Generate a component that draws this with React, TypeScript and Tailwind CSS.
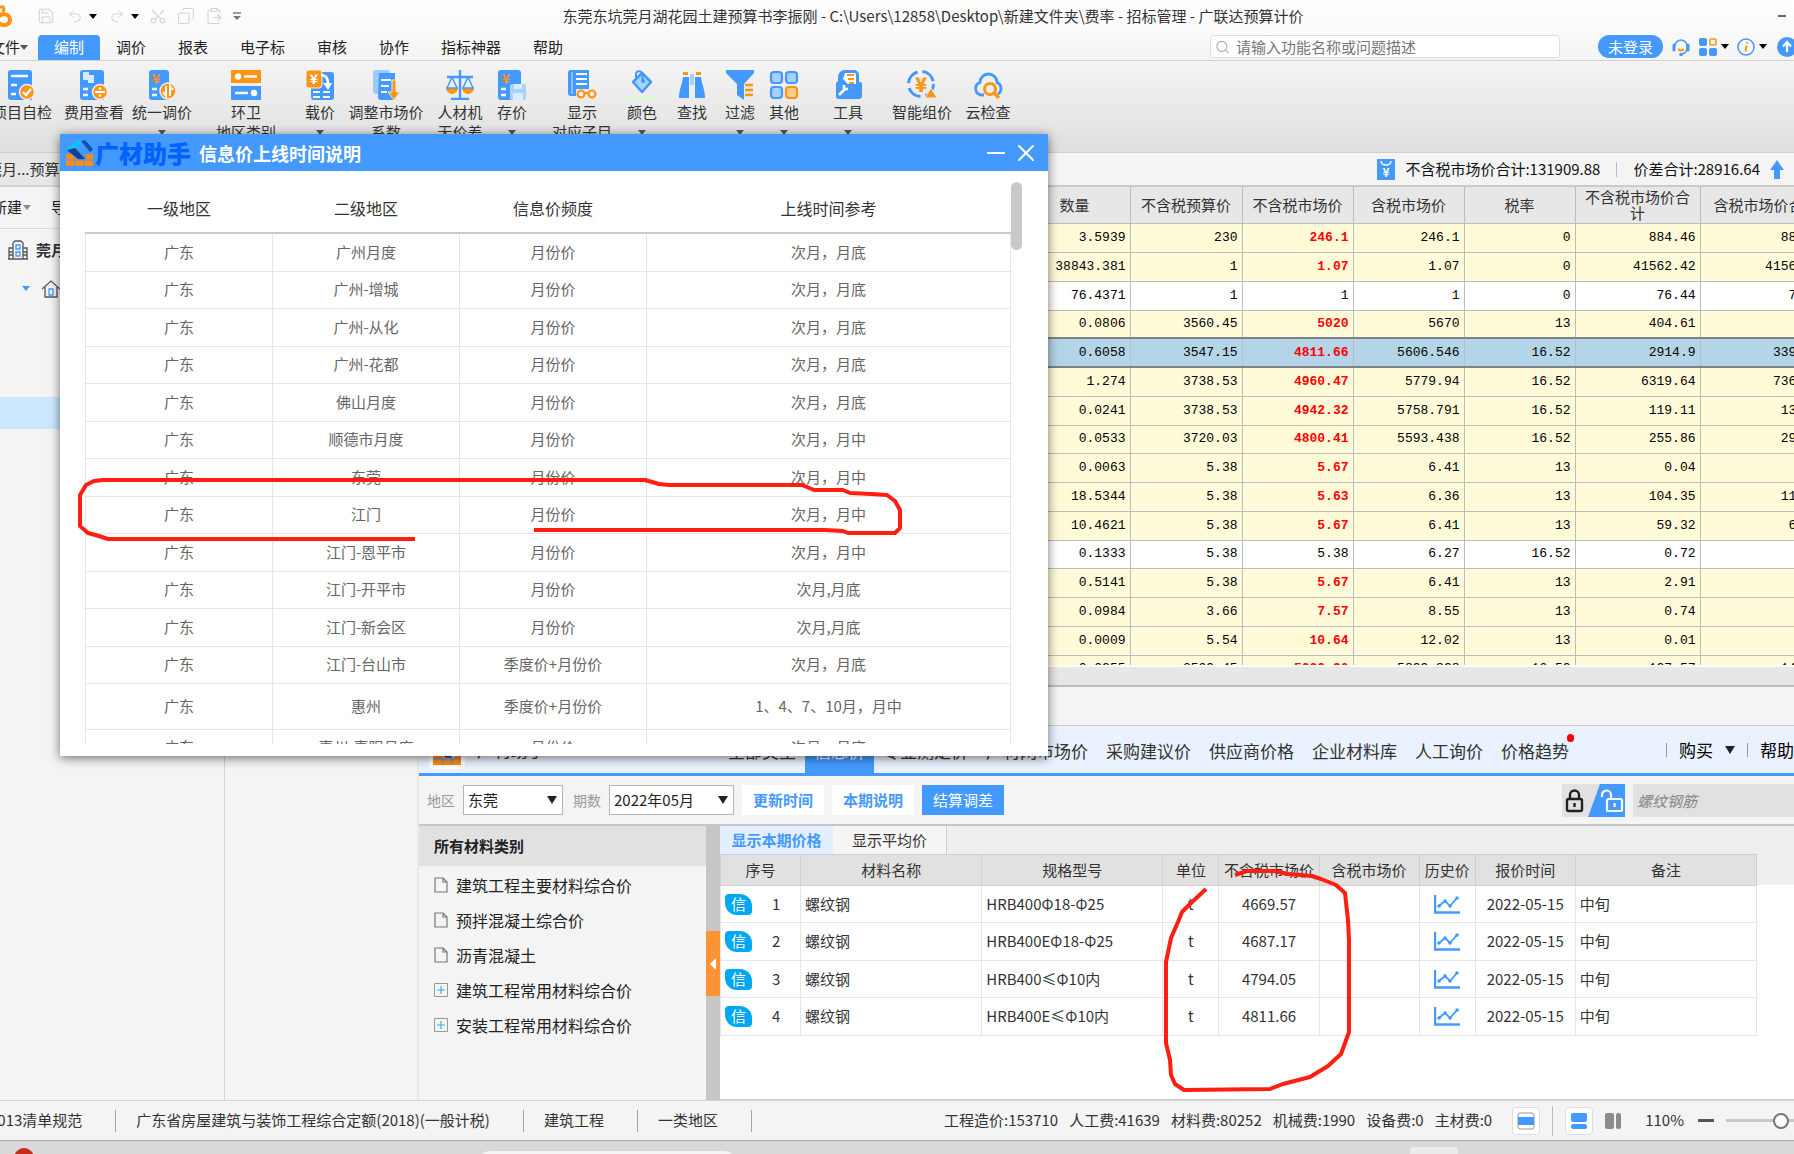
import React from "react";
import {
  ClipboardPaste,
  Copy,
  Minus,
  Redo2,
  Save,
  Scissors,
  Search,
  Undo2,
  X,
} from "lucide-react";

const BLUE = "#4499ff";
const ORANGE = "#ff9414";

/* ---------- small shared bits ---------- */

const Caret: React.FC<{ className?: string }> = ({ className = "text-black" }) => (
  <svg viewBox="0 0 8 5" className={`h-[5px] w-2 shrink-0 fill-current ${className}`}>
    <path d="M0 0h8L4 5z" />
  </svg>
);

const BrickLogo: React.FC<{ className?: string }> = ({ className }) => (
  <svg viewBox="0 0 27 26" className={className}>
    <path d="M0 14h5l7 6h6l3-3-2-3h8v12H0z" fill="#ff8a14" />
    <path d="M0 20h27M9 20v6M18 20v6" stroke="#4499ff" strokeWidth="1" />
    <path d="M1 9 11 0h7l-8 9-8 3z" fill="#16bdfa" />
    <path d="m1 10 8-2 10 11h-7z" fill="#0d3f92" />
    <path d="m15 1 4-1 8 9-3 3z" fill="#0b4fb8" />
  </svg>
);

/* ---------- ribbon ---------- */

const sheet = <path d="M4 0h18a3 3 0 0 1 3 3v27H4a3 3 0 0 1-3-3V3a3 3 0 0 1 3-3z" fill={BLUE} />;

const ribbonIcons: Record<string, React.ReactNode> = {
  check: (
    <>
      {sheet}
      <path d="M4 6h17M4 15h6M4 24h5" stroke="#fff" strokeWidth="2.4" />
      <circle cx="20" cy="22" r="7.5" fill={ORANGE} stroke="#eee" strokeWidth="1.5" />
      <path d="m16 22 3 3 5-6" fill="none" stroke="#fff" strokeWidth="2.4" />
    </>
  ),
  cost: (
    <>
      {sheet}
      <path d="M4 2h6v8H4zM9 5h6v8H9z" fill="#d7eaff" />
      <path d="M4 19h5M4 25h5" stroke="#fff" strokeWidth="2.4" />
      <circle cx="21" cy="22" r="7.5" fill={ORANGE} stroke="#eee" strokeWidth="1.5" />
      <path d="M16 22h10" stroke="#fff" strokeWidth="2.2" />
      <circle cx="21" cy="18.5" r="1.3" fill="#fff" />
      <circle cx="21" cy="25.5" r="1.3" fill="#fff" />
    </>
  ),
  adjust: (
    <>
      <path d="M5 0h14a3 3 0 0 1 3 3v27H5a3 3 0 0 1-3-3V3a3 3 0 0 1 3-3z" fill={BLUE} />
      <text x="9" y="14" textAnchor="middle" fontSize="14" fontWeight="700" fill={ORANGE}>¥</text>
      <path d="M5 19h5M5 25h5" stroke="#fff" strokeWidth="2.4" />
      <circle cx="21" cy="21" r="8" fill={ORANGE} stroke="#eee" strokeWidth="1.5" />
      <path d="M19 16v10l-3-4M23 26V16l3 4" fill="none" stroke="#fff" strokeWidth="2" />
    </>
  ),
  region: (
    <>
      <path d="M0 0h30v13H0z" fill={ORANGE} />
      <path d="M0 16h30v14H0z" fill={BLUE} />
      <circle cx="7" cy="6.5" r="3.2" fill="#fff" />
      <path d="M13 6.5h13M4 23h13" stroke="#fff" strokeWidth="2.4" />
      <circle cx="23" cy="23" r="3.2" fill="#fff" />
    </>
  ),
  load: (
    <>
      <rect x="6" y="2" width="23" height="28" rx="3" fill={BLUE} />
      <rect x="1" y="0" width="16" height="18" rx="3" fill={ORANGE} stroke="#eee" />
      <text x="9" y="14" textAnchor="middle" fontSize="14" fontWeight="700" fill="#fff">¥</text>
      <path d="M16 5c5 0 7 4 7 9" fill="none" stroke="#fff" strokeWidth="2.6" />
      <path d="M18 13h9l-4 7z" fill="#fff" />
      <path d="M8 22h7M18 22h7M8 27h7M18 27h7" stroke="#fff" strokeWidth="2" />
    </>
  ),
  factor: (
    <>
      <rect x="2" y="0" width="17" height="24" rx="3" fill="#9ccbff" />
      <path d="M8 3h16v27H10a3 3 0 0 1-3-3z" fill={BLUE} />
      <path d="M10 10h10M10 16h8M10 22h6" stroke="#fff" strokeWidth="2" />
      <path d="M21 10h4v12h4l-6 8-6-8h4z" fill={ORANGE} stroke="#e8e8e8" />
    </>
  ),
  scale: (
    <>
      <path d="M15 0v28M6 29h18M2 7h26" stroke={BLUE} strokeWidth="2.4" />
      <path d="M7 7 2 18M7 7l5 11M23 7l-5 11M23 7l5 11" stroke={BLUE} strokeWidth="1.5" />
      <path d="M1 18h12a6 6 0 0 1-12 0zM17 18h12a6 6 0 0 1-12 0z" fill={ORANGE} />
      <path d="M1 18h12M17 18h12" stroke={BLUE} strokeWidth="1.5" />
    </>
  ),
  store: (
    <>
      <path d="M4 0h17a3 3 0 0 1 3 3v27H4a3 3 0 0 1-3-3V3a3 3 0 0 1 3-3z" fill={BLUE} />
      <text x="9" y="14" textAnchor="middle" fontSize="14" fontWeight="700" fill={ORANGE}>¥</text>
      <path d="M4 19h5M4 25h5" stroke="#fff" strokeWidth="2.4" />
      <rect x="13" y="14" width="16" height="16" rx="2" fill="#a9d3ff" />
      <path d="M17 14h8v5h-8zM16 23h10v7H16z" fill="#d9edff" />
    </>
  ),
  show: (
    <>
      <path d="M5 0h17v19H9v7H4a3 3 0 0 1-3-3V3a3 3 0 0 1 4-3z" fill={BLUE} />
      <path d="M9 4h11M9 9h11M9 14h11" stroke="#fff" strokeWidth="2.2" />
      <path d="M5 2v22" stroke="#cfe5ff" strokeWidth="1" />
      <circle cx="14" cy="24" r="3.5" fill="none" stroke={ORANGE} strokeWidth="2.2" />
      <circle cx="25" cy="24" r="3.5" fill="none" stroke={ORANGE} strokeWidth="2.2" />
      <path d="M17 23h5" stroke={ORANGE} strokeWidth="2" />
    </>
  ),
  colour: (
    <>
      <path d="m15 3 9 9-9 10-9-10z" fill="#a9d2ff" stroke={BLUE} strokeWidth="2.6" strokeLinejoin="round" />
      <path d="M9 10V4c0-3 5-4 6-1l1 8" fill="none" stroke={BLUE} strokeWidth="2" />
      <circle cx="16" cy="11" r="2" fill={BLUE} />
      <path d="M1 28h28" stroke="#dcf8d0" strokeWidth="3" />
    </>
  ),
  find: (
    <>
      <path d="M6 2h5v3H6zM19 2h5v3h-5z" fill={ORANGE} />
      <path d="M6 7h6v21H2c0-9 3-12 4-21zM18 7h6c1 9 4 12 4 21H18z" fill={BLUE} />
      <path d="M14 4v11M16 4v11" stroke="#7db8ff" strokeWidth="1.2" />
    </>
  ),
  filter: (
    <>
      <path d="M1 0h28v3L19 14v16l-7-5V14L1 3z" fill={BLUE} />
      <path d="M20 15h8M20 20h8M20 25h8" stroke={ORANGE} strokeWidth="2.4" />
    </>
  ),
  other: (
    <>
      <g fill="#a6d0ff" stroke={BLUE} strokeWidth="2.2">
        <rect x="2" y="2" width="11" height="11" rx="3" />
        <rect x="17" y="2" width="11" height="11" rx="3" />
        <rect x="2" y="17" width="11" height="11" rx="3" />
      </g>
      <rect x="17" y="17" width="11" height="11" rx="3" fill="#ffd08a" stroke={ORANGE} strokeWidth="2.2" />
    </>
  ),
  tool: (
    <>
      <path d="M12 0h9a5 5 0 0 1 5 5v7h1a2 2 0 0 1 2 2v12a3 3 0 0 1-3 3H6a3 3 0 0 1-3-3V13l2-2V7a7 7 0 0 1 7-7z" fill={BLUE} />
      <path d="M12 3h9a2 2 0 0 1 2 2v9h-8l-5-5z" fill="#fff" />
      <path d="M14 5h7M15 9h6M16 13h5" stroke={ORANGE} strokeWidth="1.8" />
      <path d="m6 25 6-6M11 15v4h4" fill="none" stroke="#fff" strokeWidth="2.6" />
    </>
  ),
  smart: (
    <>
      <circle cx="14" cy="14" r="12.5" fill="none" stroke={BLUE} strokeWidth="3" strokeDasharray="15 5" />
      <text x="14" y="22" textAnchor="middle" fontSize="20" fontWeight="900" fill={ORANGE}>¥</text>
      <path d="m24 18 6 10H18z" fill={ORANGE} stroke="#e8e8e8" />
    </>
  ),
  cloud: (
    <>
      <path
        d="M11 25H8a6.5 6.5 0 0 1-1-12.5 8.5 8.5 0 0 1 17 0A6.5 6.5 0 0 1 25 24"
        fill="none"
        stroke={BLUE}
        strokeWidth="2.8"
      />
      <circle cx="17" cy="19" r="5.5" fill="none" stroke={ORANGE} strokeWidth="3" />
      <path d="m21 23 5 5" stroke={ORANGE} strokeWidth="3.2" />
    </>
  ),
};

const ribbonItems = [
  { icon: "check", label: "项目自检", box: "w-[68px]" },
  { icon: "cost", label: "费用查看", box: "w-[68px] ml-1" },
  { icon: "adjust", label: "统一调价", box: "w-[68px]", menu: true },
  { icon: "region", label: "环卫", sub: "地区类别", box: "w-[68px] ml-4" },
  { icon: "load", label: "载价", box: "w-12 ml-4", menu: true },
  { icon: "factor", label: "调整市场价", sub: "系数", box: "w-[84px]" },
  { icon: "scale", label: "人材机", sub: "无价差", box: "w-14 ml-1" },
  { icon: "store", label: "存价", box: "w-12", menu: true },
  { icon: "show", label: "显示", sub: "对应子目", box: "w-[68px] ml-3" },
  { icon: "colour", label: "颜色", box: "w-12 ml-0.5", menu: true },
  { icon: "find", label: "查找", box: "w-12 ml-0.5" },
  { icon: "filter", label: "过滤", box: "w-12", menu: true },
  { icon: "other", label: "其他", box: "w-12 -ml-1", menu: true },
  { icon: "tool", label: "工具", box: "w-12 ml-4", menu: true },
  { icon: "smart", label: "智能组价", box: "w-[68px] ml-4" },
  { icon: "cloud", label: "云检查", box: "w-14 ml-1" },
];

const menuTabs = ["调价", "报表", "电子标", "审核", "协作", "指标神器", "帮助"];

const TopBar: React.FC = () => (
  <header>
    <div className="bg-gradient-to-b from-white to-[#f4f4f4]">
      {/* Title row with the quick access icons */}
      <div className="flex h-8 items-center overflow-hidden">
        <div className="flex w-[242px] shrink-0 items-center text-[#d4d4d4]">
          <svg viewBox="0 0 13 22" className="h-[22px] w-[13px]">
            <path d="M0 3c3-3 5 0 3 4" fill="none" stroke={ORANGE} strokeWidth="3" />
            <path d="M-2 12c4-5 12-3 12 3 0 5-7 7-11 3" fill="none" stroke={ORANGE} strokeWidth="4" />
          </svg>
          <Save className="ml-6 h-[18px] w-[18px]" strokeWidth={1.5} />
          <Undo2 className="ml-3 h-4 w-4" strokeWidth={1.5} />
          <Caret className="ml-1.5 text-black" />
          <Redo2 className="ml-3 h-4 w-4" strokeWidth={1.5} />
          <Caret className="ml-1.5 text-black" />
          <Scissors className="ml-2.5 h-[18px] w-[18px] -rotate-90" strokeWidth={1.5} />
          <Copy className="ml-2.5 h-[18px] w-[18px] -scale-x-100" strokeWidth={1.5} />
          <ClipboardPaste className="ml-2.5 h-[18px] w-[18px]" strokeWidth={1.5} />
          <svg viewBox="0 0 8 9" className="ml-2.5 h-[9px] w-2">
            <path d="M0 1h8" stroke="#777" strokeWidth="1.5" />
            <path d="m0 4 4 4 4-4z" fill="#777" />
          </svg>
        </div>
        <h1 className="flex-1 truncate text-center text-[15px] leading-5 text-[#333]">
          东莞东坑莞月湖花园土建预算书李振刚 - C:\Users\12858\Desktop\新建文件夹\费率 - 招标管理 - 广联达预算计价
        </h1>
        <div className="flex w-[170px] shrink-0 justify-end pr-2">
          <button aria-label="最小化" className="h-0.5 w-2 bg-[#666]" />
        </div>
      </div>

      {/* Menu tabs, search and account */}
      <div className="flex h-[29px] items-end overflow-hidden border-b border-[#d2d2d2] text-[15px] text-[#222]">
        <button className="-ml-2.5 flex h-[25px] w-12 shrink-0 items-center whitespace-nowrap">
          文件
          <Caret className="text-[#555]" />
        </button>
        <button className="h-[25px] w-[62px] shrink-0 rounded-t bg-[#4499ff] text-white">编制</button>
        <nav className="flex shrink-0">
          {menuTabs.map((tab) => (
            <button key={tab} className="h-[25px] px-4">
              {tab}
            </button>
          ))}
        </nav>
        <div className="-mr-[3px] mb-0.5 ml-auto flex items-center">
          <label className="flex h-[23px] w-[350px] items-center gap-1.5 rounded border border-[#dcdcdc] bg-white px-1">
            <Search className="h-4 w-4 text-[#aaa]" strokeWidth={1.8} />
            <input
              aria-label="搜索"
              placeholder="请输入功能名称或问题描述"
              className="w-full bg-transparent text-[15px] leading-5 outline-none placeholder:text-[#777]"
            />
          </label>
          <button className="ml-[38px] h-[23px] w-[65px] rounded-full bg-[#4499ff] text-[15px] leading-5 text-white">
            未登录
          </button>
          <svg viewBox="0 0 20 20" className="ml-2 h-5 w-5" fill="none">
            <path d="M4 9a6 6 0 0 1 12 0v2a6 6 0 0 1-5 6" stroke={BLUE} strokeWidth="1.6" />
            <path d="M3 8v5M17 8v5" stroke={BLUE} strokeWidth="3" strokeLinecap="round" />
            <circle cx="10" cy="17.5" r="1.8" fill={BLUE} />
            <path d="M7 12c2 2 4 2 6 0" stroke={ORANGE} strokeWidth="2" />
          </svg>
          <svg viewBox="0 0 18 18" className="ml-2 h-[18px] w-[18px]">
            <rect width="8" height="8" rx="2" fill={BLUE} />
            <rect y="10" width="8" height="8" rx="2" fill={BLUE} />
            <rect x="10" y="10" width="8" height="8" rx="2" fill={BLUE} />
            <rect x="11" y="1" width="6" height="6" rx="1" fill="none" stroke={ORANGE} strokeWidth="1.6" />
          </svg>
          <Caret className="ml-1 text-black" />
          <svg viewBox="0 0 18 18" className="ml-2 h-[18px] w-[18px]">
            <circle cx="9" cy="9" r="8" fill="#f4f9ff" stroke={BLUE} strokeWidth="1.5" />
            <path d="m9.500 7.500-1 6M10 4v1.500" stroke={ORANGE} strokeWidth="2" />
          </svg>
          <Caret className="ml-1 text-black" />
          <svg viewBox="0 0 20 20" className="ml-2.5 h-5 w-5">
            <circle cx="10" cy="10" r="10" fill={BLUE} />
            <path d="M10 15V6M6 9.500 10 5l4 4.500" fill="none" stroke="#fff" strokeWidth="2.2" />
          </svg>
        </div>
      </div>
    </div>

    {/* Ribbon */}
    <div className="flex h-[92px] overflow-hidden border-b border-[#d0d0d0] bg-gradient-to-b from-[#f4f4f4] to-[#dfdfdf] pt-[9px] text-[15px] text-[#333]">
      <div className="-ml-3 flex">
        {ribbonItems.map((item) => (
          <button
            key={item.label}
            className={`flex shrink-0 flex-col items-center whitespace-nowrap leading-5 ${item.box}`}
          >
            <svg viewBox="0 0 30 30" className="mb-0.5 h-[30px] w-[30px]">
              {ribbonIcons[item.icon]}
            </svg>
            <span>{item.label}</span>
            {item.sub && <span>{item.sub}</span>}
            {item.menu && <Caret className="mt-2 text-[#555]" />}
          </button>
        ))}
      </div>
    </div>
  </header>
);

/* ---------- left project tree ---------- */

const ProjectTree: React.FC = () => (
  <aside className="flex w-[225px] shrink-0 flex-col overflow-hidden border-r border-[#d5d5d5] text-[15px] text-[#333]">
    <div className="h-[34px] border-b-2 border-[#d4d4d4] bg-[#e7e7e7] leading-8">
      <span className="-ml-[13px] whitespace-nowrap">莞月...预算</span>
    </div>
    <div className="flex h-[42px] items-center border-b border-[#d8d8d8] text-[#222]">
      <button className="-ml-2 flex items-center gap-px whitespace-nowrap">
        新建
        <Caret className="text-[#888]" />
      </button>
      <button className="ml-5">导入</button>
    </div>
    <div className="flex h-[42px] items-center gap-2 pl-2 font-bold">
      <svg viewBox="0 0 20 20" className="h-5 w-5" fill="none" stroke="#555" strokeWidth="1.3">
        <path d="M0 19h20M5 19V3l2-2h6l2 2v16M1 19V8h4M19 19V8h-4M1 12h4M1 15h4M15 12h4M15 15h4" />
        <path d="M8 5h4v4H8zM8 12h4v4H8z" stroke={BLUE} />
      </svg>
      莞月
    </div>
    <div className="flex h-[35px] items-center gap-3 pl-[22px]">
      <Caret className="text-[#4499ff]" />
      <svg viewBox="0 0 18 18" className="h-[18px] w-[18px]" fill="none" stroke="#555" strokeWidth="1.3">
        <path d="m0 9 9-8 9 8M3 7v10h12V7" />
        <path d="M7 9h4v6H7z" stroke={BLUE} />
      </svg>
    </div>
    <div className="mt-[91px] h-8 bg-[#cce8ff]" />
  </aside>
);

/* ---------- market price grid ---------- */

const marketRows = [
  ["3.5939", "230", "246.1", "246.1", "0", "884.46", "884.46"],
  ["38843.381", "1", "1.07", "1.07", "0", "41562.42", "41562.42"],
  ["76.4371", "1", "1", "1", "0", "76.44", "76.44"],
  ["0.0806", "3560.45", "5020", "5670", "13", "404.61", "457"],
  ["0.6058", "3547.15", "4811.66", "5606.546", "16.52", "2914.9", "3396.45"],
  ["1.274", "3738.53", "4960.47", "5779.94", "16.52", "6319.64", "7363.64"],
  ["0.0241", "3738.53", "4942.32", "5758.791", "16.52", "119.11", "138.79"],
  ["0.0533", "3720.03", "4800.41", "5593.438", "16.52", "255.86", "298.13"],
  ["0.0063", "5.38", "5.67", "6.41", "13", "0.04", "0.04"],
  ["18.5344", "5.38", "5.63", "6.36", "13", "104.35", "117.88"],
  ["10.4621", "5.38", "5.67", "6.41", "13", "59.32", "67.06"],
  ["0.1333", "5.38", "5.38", "6.27", "16.52", "0.72", "0.84"],
  ["0.5141", "5.38", "5.67", "6.41", "13", "2.91", "3.3"],
  ["0.0984", "3.66", "7.57", "8.55", "13", "0.74", "0.84"],
  ["0.0009", "5.54", "10.64", "12.02", "13", "0.01", "0.01"],
  ["0.0255", "3509.45", "5020.90", "5899.828", "16.52", "127.57", "148.65"],
];

const unchangedRows = [2, 11];
const selectedRow = 4;

const rowStyle = (i: number) => {
  if (i === selectedRow) return "bg-[#b4d4e7] border-y-2 border-[#7c8287]";
  return unchangedRows.includes(i) ? "bg-white" : "bg-[#fffbd8]";
};

const MarketGrid: React.FC = () => (
  <div className="h-[480px] shrink-0 overflow-hidden border-b-2 border-white bg-white">
    <table className="w-[1607px] table-fixed border-collapse text-black">
      <colgroup>
        <col className="w-[794px]" />
        <col className="w-[111px]" />
        <col className="w-[112px]" />
        <col className="w-[111px]" />
        <col className="w-[111px]" />
        <col className="w-[111px]" />
        <col className="w-[125px]" />
        <col className="w-[132px]" />
      </colgroup>
      <thead>
        <tr className="h-9 bg-[#e7e7e7] text-[15px] leading-4 text-[#333]">
          <th />
          {["数量", "不含税预算价", "不含税市场价", "含税市场价", "税率", "不含税市场价合计", "含税市场价合计"].map((h) => (
            <th key={h} className="border border-t-0 border-[#bdbdbd] px-1 font-normal">
              {h}
            </th>
          ))}
        </tr>
      </thead>
      <tbody className="font-['Liberation_Mono','Noto_Sans_CJK_SC',monospace] text-[13px] leading-4">
        {marketRows.map((row, i) => (
          <tr key={i} className={`h-[29px] nth-[4n]:h-7 ${rowStyle(i)}`}>
            <td />
            {row.map((value, c) => (
              <td
                key={c}
                className={`border-x border-x-[#bdbdbd] px-1 text-right ${
                  i === selectedRow ? "" : "border-y border-y-[#bdbdbd]"
                } ${c === 2 && !unchangedRows.includes(i) ? "font-bold text-[#ff0000]" : ""}`}
              >
                {value}
              </td>
            ))}
          </tr>
        ))}
      </tbody>
    </table>
  </div>
);

const TotalsBar: React.FC = () => (
  <div className="flex h-[34px] shrink-0 items-center justify-end border-b-2 border-[#cbcbcb] pr-2.5 text-[15px] text-[#111]">
    <svg viewBox="0 0 18 21" className="mr-2.5 h-[21px] w-[18px]">
      <rect width="18" height="21" rx="1" fill={BLUE} />
      <path d="M4 2a5 4 0 0 0 10 0" fill="none" stroke="#fff" strokeWidth="1.5" />
      <text x="9" y="18" textAnchor="middle" fontSize="12" fontWeight="700" fill="#fff">¥</text>
    </svg>
    <span>不含税市场价合计:131909.88</span>
    <span className="mx-4 h-[15px] w-px bg-[#a9bfdc]" />
    <span>价差合计:28916.64</span>
    <svg viewBox="0 0 14 19" className="ml-2.5 h-[19px] w-3.5">
      <path d="m7 0 7 10h-4v9H4v-9H0z" fill={BLUE} />
    </svg>
  </div>
);

/* ---------- material assistant ---------- */

const assistantTabs = [
  "全部类型",
  "信息价",
  "专业测定价",
  "广材网市场价",
  "采购建议价",
  "供应商价格",
  "企业材料库",
  "人工询价",
  "价格趋势",
];

const AssistantTabs: React.FC = () => (
  <div className="flex h-[50px] shrink-0 items-stretch overflow-hidden border-b-3 border-[#4499ff] bg-[#eaf1ff] text-[17px] text-[#333]">
    <div className="flex w-[300px] shrink-0 items-center gap-3 pl-2.5">
      <div className="mt-1 rounded-md bg-white p-1">
        <BrickLogo className="h-[27px] w-7" />
      </div>
      <span>广材助手</span>
    </div>
    <nav className="flex shrink-0">
      {assistantTabs.map((tab) => (
        <button
          key={tab}
          className={`relative px-[9px] pt-0.5 ${tab === "信息价" ? "bg-[#4499ff] text-white" : ""}`}
        >
          {tab}
          {tab === "价格趋势" && (
            <span className="absolute right-1 top-2 h-2 w-[7px] rounded-full bg-[#ff0000]" />
          )}
        </button>
      ))}
    </nav>
    <div className="ml-auto flex shrink-0 items-center gap-3 text-black">
      <span className="h-3.5 w-px bg-[#999]" />
      <button className="flex items-center gap-3">
        购买
        <svg viewBox="0 0 10 8" className="h-2 w-2.5">
          <path d="M0 0h10L5 8z" fill="#222" />
        </svg>
      </button>
      <span className="h-3.5 w-px bg-[#999]" />
      <button>帮助</button>
    </div>
  </div>
);

const Picker: React.FC<{ id: string; label: string; value: string; box: string }> = ({ id, label, value, box }) => (
  <div className="flex items-center gap-2">
    <label htmlFor={id} className="text-[14px] text-[#999]">
      {label}
    </label>
    <div className={`relative ${box}`}>
      <select
        id={id}
        className="h-[30px] w-full appearance-none border border-[#b8b8b8] bg-white pl-1 text-[15px] leading-5 text-[#222]"
      >
        <option>{value}</option>
      </select>
      <svg viewBox="0 0 10 8" className="pointer-events-none absolute right-1.5 top-[11px] h-2 w-2.5">
        <path d="M0 0h10L5 8z" fill="#222" />
      </svg>
    </div>
  </div>
);

const FilterBar: React.FC = () => (
  <div className="flex h-[50px] shrink-0 items-center overflow-hidden border-b-2 border-[#c6c6c6] pl-2 text-[15px]">
    <div className="flex items-center gap-2.5">
      <Picker id="region" label="地区" value="东莞" box="w-[100px]" />
      <Picker id="period" label="期数" value="2022年05月" box="w-[125px]" />
    </div>
    <div className="ml-2 flex gap-2 font-bold">
      <button className="h-[30px] w-[82px] bg-white text-[#4499ff]">更新时间</button>
      <button className="h-[30px] w-[82px] bg-white text-[#4499ff]">本期说明</button>
      <button className="h-[30px] w-[82px] bg-[#4499ff] font-normal text-white">结算调差</button>
    </div>
    <button aria-label="锁定" className="ml-auto">
      <svg viewBox="0 0 63 33" className="h-[33px] w-[63px]">
        <path d="M0 0h63v33H0z" fill="#e1e1e1" />
        <path d="M38 0h25v33H26z" fill={BLUE} />
        <g fill="none" stroke="#222" strokeWidth="2.4">
          <rect x="5" y="15" width="15" height="12" rx="1.5" />
          <path d="M8 15v-4a4.500 4.500 0 0 1 9 0v4M12.500 19v4" />
        </g>
        <g fill="none" stroke="#fff" strokeWidth="2.2">
          <rect x="45" y="15" width="15" height="12" rx="1.5" />
          <path d="M40 13v-2a4.500 4.500 0 0 1 9 0v4M52.500 19v4" />
        </g>
      </svg>
    </button>
    <input
      aria-label="材料搜索"
      placeholder="螺纹钢筋"
      className="ml-2 h-[33px] w-[161px] bg-[#e1e1e1] px-1 text-[15px] italic outline-none placeholder:text-[#888]"
    />
  </div>
);

const categories = [
  { name: "建筑工程主要材料综合价", group: false },
  { name: "预拌混凝土综合价", group: false },
  { name: "沥青混凝土", group: false },
  { name: "建筑工程常用材料综合价", group: true },
  { name: "安装工程常用材料综合价", group: true },
];

const CategoryPanel: React.FC = () => (
  <div className="w-[287px] shrink-0 text-[#222]">
    <h2 className="mb-px flex h-10 items-center bg-[#e1e1e1] pl-[15px] text-[15px] font-bold">所有材料类别</h2>
    <ul className="text-[16px]">
      {categories.map((item) => (
        <li key={item.name} className="flex h-[35px] items-center gap-2 pl-[15px]">
          {item.group ? (
            <svg viewBox="0 0 14 14" className="h-3.5 w-3.5" fill="none">
              <path d="M.5.5h13v13H.5z" stroke="#999" />
              <path d="M3 7h8M7 3v8" stroke="#35b4e8" strokeWidth="1.2" />
            </svg>
          ) : (
            <svg viewBox="0 0 14 16" className="h-4 w-3.5" fill="none" stroke="#777" strokeWidth="1.2">
              <path d="M1 1h8l4 4v10H1zM9 1v4h4" />
            </svg>
          )}
          {item.name}
        </li>
      ))}
    </ul>
  </div>
);

const materials = [
  { spec: "HRB400Φ18-Φ25", price: "4669.57" },
  { spec: "HRB400EΦ18-Φ25", price: "4687.17" },
  { spec: "HRB400≤Φ10内", price: "4794.05" },
  { spec: "HRB400E≤Φ10内", price: "4811.66" },
];

const MaterialTable: React.FC = () => (
  <div className="flex min-w-0 flex-1 flex-col overflow-hidden border-b border-[#ccc] bg-white text-[15px] text-[#333]">
    <div className="flex h-7 shrink-0 bg-[#efefef]">
      <button className="w-[113px] bg-[#e3eeff] font-bold text-[#4499ff]">显示本期价格</button>
      <button className="w-[114px] border-r border-[#ccc] bg-[#f5f5f5]">显示平均价</button>
    </div>
    <div className="bg-gradient-to-b from-[#efefef] from-[31px] to-white to-[31px]">
      <table className="w-[1037px] table-fixed border-collapse">
        <colgroup>
          <col className="w-20" />
          <col className="w-[181px]" />
          <col className="w-[181px]" />
          <col className="w-14" />
          <col className="w-[100px]" />
          <col className="w-[100px]" />
          <col className="w-14" />
          <col className="w-[100px]" />
          <col className="w-[181px]" />
        </colgroup>
        <thead>
          <tr className="h-[31px] bg-[#e1e1e1]">
            {["序号", "材料名称", "规格型号", "单位", "不含税市场价", "含税市场价", "历史价", "报价时间", "备注"].map((h) => (
              <th key={h} className="whitespace-nowrap border border-[#cfcfcf] font-normal">
                {h}
              </th>
            ))}
          </tr>
        </thead>
        <tbody className="[&_td]:border [&_td]:border-[#e6e6e6] [&_td]:px-1">
          {materials.map((item, i) => (
            <tr key={item.spec} className="h-[37px] even:h-[38px]">
              <td>
                <div className="flex items-center gap-5">
                  <span className="flex h-[21px] w-[27px] items-center justify-center rounded-tl-sm rounded-tr-xl rounded-br-sm rounded-bl-xl bg-[#00a8f3] text-white">
                    信
                  </span>
                  {i + 1}
                </div>
              </td>
              <td>螺纹钢</td>
              <td>{item.spec}</td>
              <td className="text-center">t</td>
              <td className="text-center">{item.price}</td>
              <td />
              <td>
                <svg viewBox="0 0 26 19" className="mx-auto h-[19px] w-[26px]" fill="none" stroke={BLUE}>
                  <path d="M1 0v17.500h25" strokeWidth="2.4" />
                  <path d="m5 11 6-5 5 5 7-8" strokeWidth="1.8" />
                  <g fill={BLUE} stroke="none">
                    <circle cx="5" cy="11" r="1.8" />
                    <circle cx="11" cy="6" r="1.8" />
                    <circle cx="16" cy="11" r="1.8" />
                    <circle cx="23" cy="3" r="1.8" />
                  </g>
                </svg>
              </td>
              <td className="whitespace-nowrap text-center">2022-05-15</td>
              <td>中旬</td>
            </tr>
          ))}
        </tbody>
      </table>
    </div>
  </div>
);

/* ---------- status bar ---------- */

const fees = ["工程造价:153710", "人工费:41639", "材料费:80252", "机械费:1990", "设备费:0", "主材费:0"];

const StatusBar: React.FC = () => (
  <footer className="shrink-0 text-[15px] text-[#333]">
    <div className="flex h-[41px] items-center overflow-hidden whitespace-nowrap border-y border-t-[#d5d5d5] border-b-[#aaa] bg-[#f4f4f4]">
      <span className="-ml-[11px]">2013清单规范</span>
      {["广东省房屋建筑与装饰工程综合定额(2018)(一般计税)", "建筑工程", "一类地区"].map((text) => (
        <span key={text} className="flex items-center">
          <span className="ml-[33px] mr-5 h-[22px] w-px bg-[#9aa5b0]" />
          {text}
        </span>
      ))}
      <span className="ml-[33px] h-[22px] w-px bg-[#9aa5b0]" />
      <div className="-mr-[42px] ml-auto flex shrink-0 items-center">
        <div className="flex gap-[11px]">
          {fees.map((fee) => (
            <span key={fee}>{fee}</span>
          ))}
        </div>
        <button aria-label="分栏" className="ml-5 rounded border border-[#ddd] bg-white p-1">
          <svg viewBox="0 0 18 18" className="h-[18px] w-[18px]">
            <rect x="1" y="1" width="16" height="16" rx="2" fill="#fff" stroke="#999" />
            <path d="M1 5h16v8H1z" fill={BLUE} />
          </svg>
        </button>
        <span className="mx-3 h-[30px] w-px bg-[#bbb]" />
        <button aria-label="上下布局" className="rounded border border-[#ddd] bg-white p-1">
          <svg viewBox="0 0 18 18" className="h-[18px] w-[18px]" fill={BLUE}>
            <rect x="1" y="1" width="16" height="9" rx="2" />
            <rect x="1" y="12" width="16" height="5" rx="2" />
          </svg>
        </button>
        <button aria-label="左右布局" className="ml-3">
          <svg viewBox="0 0 16 16" className="h-4 w-4" fill="#8c8c8c">
            <rect width="9" height="16" rx="2" />
            <rect x="11" width="5" height="16" rx="2" />
          </svg>
        </button>
        <span className="ml-6">110%</span>
        <button aria-label="缩小" className="ml-3.5 h-[3px] w-4 bg-[#555]" />
        <input
          type="range"
          aria-label="缩放"
          defaultValue={50}
          className="ml-3 h-[3px] w-[110px] appearance-none bg-[#c8c8c8] [&::-webkit-slider-thumb]:h-4 [&::-webkit-slider-thumb]:w-4 [&::-webkit-slider-thumb]:appearance-none [&::-webkit-slider-thumb]:rounded-full [&::-webkit-slider-thumb]:border-2 [&::-webkit-slider-thumb]:border-[#777] [&::-webkit-slider-thumb]:bg-white"
        />
      </div>
    </div>
    {/* Top edge of the desktop task bar */}
    <div className="flex h-[13px] items-start overflow-hidden bg-[#d9d9d9]">
      <span className="ml-3.5 mt-[7px] h-5 w-5 shrink-0 rounded-full bg-[#c42b1c]" />
      <span className="ml-[444px] mt-2.5 h-8 w-[258px] shrink-0 rounded-xl bg-[#f4f4f4]" />
      <span className="ml-[674px] mt-1.5 h-8 w-12 shrink-0 rounded bg-[#ebebeb]" />
    </div>
  </footer>
);

/* ---------- release time dialog ---------- */

const releaseRows = [
  ["广州月度", "月份价", "次月，月底"],
  ["广州-增城", "月份价", "次月，月底"],
  ["广州-从化", "月份价", "次月，月底"],
  ["广州-花都", "月份价", "次月，月底"],
  ["佛山月度", "月份价", "次月，月底"],
  ["顺德市月度", "月份价", "次月，月中"],
  ["东莞", "月份价", "次月，月中"],
  ["江门", "月份价", "次月，月中"],
  ["江门-恩平市", "月份价", "次月，月中"],
  ["江门-开平市", "月份价", "次月,月底"],
  ["江门-新会区", "月份价", "次月,月底"],
  ["江门-台山市", "季度价+月份价", "次月，月底"],
  ["惠州", "季度价+月份价", "1、4、7、10月，月中"],
  ["惠州-惠阳月度", "月份价", "次月，月底"],
];

const ReleaseDialog: React.FC = () => (
  <section
    role="dialog"
    aria-label="信息价上线时间说明"
    className="absolute left-[60px] top-[134px] h-[622px] w-[988px] bg-white shadow-[0_2px_10px_rgba(0,0,0,0.55)]"
  >
    <div className="flex h-[37px] items-center bg-[#4499ff] pl-1.5 pr-2 text-white">
      <BrickLogo className="h-[26px] w-[27px]" />
      <span className="ml-0.5 text-[24px] font-black leading-6 text-[#0062ff]">广材助手</span>
      <h2 className="ml-2 text-[18px] font-bold leading-6">信息价上线时间说明</h2>
      <button aria-label="最小化" className="ml-auto">
        <Minus className="h-7 w-7" strokeWidth={1.8} />
      </button>
      <button aria-label="关闭" className="ml-0.5">
        <X className="h-7 w-7" strokeWidth={1.8} />
      </button>
    </div>
    <div className="ml-[25px] mt-[11px] flex h-[562px] items-start overflow-hidden">
      <table className="mt-0.5 w-[925px] table-fixed border-collapse text-center text-[15px] text-[#666]">
        <colgroup>
          <col className="w-[187px]" />
          <col className="w-[187px]" />
          <col className="w-[187px]" />
          <col className="w-[364px]" />
        </colgroup>
        <thead>
          <tr className="h-[49px] border-b-2 border-[#cacaca] text-[16px] text-[#333]">
            {["一级地区", "二级地区", "信息价频度", "上线时间参考"].map((h) => (
              <th key={h} className="font-normal">
                {h}
              </th>
            ))}
          </tr>
        </thead>
        <tbody>
          {releaseRows.map(([area, rate, time]) => (
            <tr key={area} className={area === "惠州" ? "h-[46px]" : "h-[38px] even:h-[37px]"}>
              {["广东", area, rate, time].map((text, c) => (
                <td key={c} className="border border-[#e5e5e5]">
                  {text}
                </td>
              ))}
            </tr>
          ))}
        </tbody>
      </table>
      <div className="h-[68px] w-[11px] shrink-0 rounded-full bg-[#c9c9c9]" />
    </div>
  </section>
);

/* Freehand red marks drawn over the dialog and the price column */
const RedMarks: React.FC = () => (
  <svg
    viewBox="0 0 1400 1120"
    className="pointer-events-none absolute left-0 top-0 h-[1120px] w-[1400px]"
    fill="none"
    stroke="#ff1e10"
    strokeWidth="4"
    strokeLinejoin="round"
  >
    <path d="M415 539H108L99 536 88 533 80 526V495L86 485 94 481 103 480H645L659 484 669 485H802L814 490H843L850 493 871 494 887 495 895 501 900 510V528L895 533H848L843 531 825 530H534" />
    <path d="M1235 875 1247 871H1274L1288 874 1312 876 1321 879 1336 885 1345 893 1348 920 1349 940V1032L1345 1043 1341 1054 1328 1066 1310 1077 1283 1084 1270 1089 1184 1090 1175 1084 1171 1075 1170 1060 1166 1043V962L1171 938 1178 922 1182 912 1190 904 1206 889" />
  </svg>
);

export default function App() {
  return (
    <div className="relative flex h-screen flex-col overflow-hidden bg-[#f4f4f4] font-['Noto_Sans_CJK_SC',sans-serif]">
      <TopBar />
      <div className="flex min-h-0 flex-1">
        <ProjectTree />
        <main className="flex min-w-0 flex-1 flex-col">
          <TotalsBar />
          <MarketGrid />
          <div className="h-5 shrink-0 border-b-2 border-[#bdbdbd] bg-[#e7e7e7]" />
          <div className="h-[38px] shrink-0" />
          <div className="flex min-h-0 flex-1">
            <div className="w-[194px] shrink-0 border-r-2 border-[#e9e9e9]" />
            <div className="flex min-w-0 flex-1 flex-col border-t border-[#c9c9c9]">
              <AssistantTabs />
              <FilterBar />
              <div className="flex min-h-0 flex-1">
                <CategoryPanel />
                <div className="flex w-3.5 shrink-0 flex-col bg-[#c8c6c5] pt-[105px]">
                  <button aria-label="收起" className="flex h-[65px] items-center justify-center bg-[#ff9436]">
                    <svg viewBox="0 0 6 12" className="h-3 w-1.5">
                      <path d="M6 0v12L0 6z" fill="#fff" />
                    </svg>
                  </button>
                </div>
                <MaterialTable />
              </div>
            </div>
          </div>
        </main>
      </div>
      <StatusBar />
      <ReleaseDialog />
      <RedMarks />
    </div>
  );
}
